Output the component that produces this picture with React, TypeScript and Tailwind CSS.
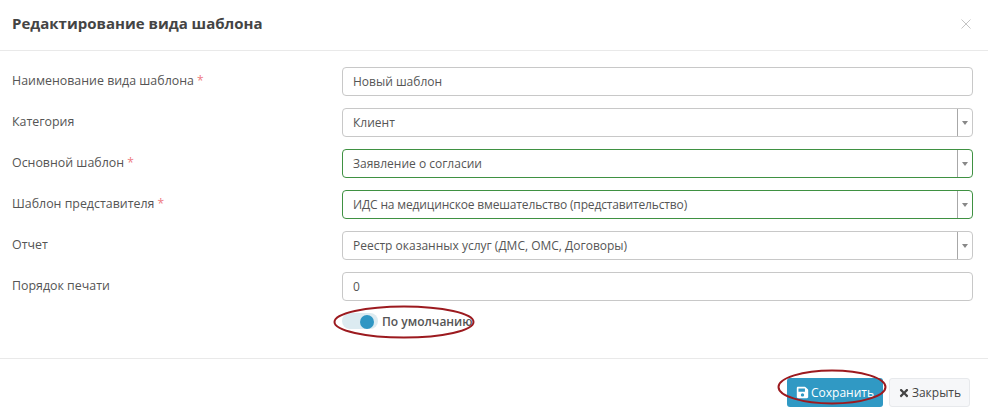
import React from 'react';
import { FaSave, FaTimes } from 'react-icons/fa';

const Field: React.FC<{ label: string; required?: boolean; children: React.ReactNode }> = ({ label, required, children }) => (
  <div className="flex h-[29px] items-center">
    <label className="w-[330px] shrink-0 text-[12.4px] text-[#555]">
      {label}
      {required && <span className="text-[12px] text-[#ee7a80]"> *</span>}
    </label>
    {children}
  </div>
);

const TextInput: React.FC<{ value: string }> = ({ value }) => (
  <div className="flex h-[29px] w-[631px] items-center rounded-[4px] border border-[#c8c8c8] bg-white pl-[10px] text-[12px] text-[#555]">
    {value}
  </div>
);

const SelectInput: React.FC<{ value: string; valid?: boolean; tight?: boolean }> = ({ value, valid, tight }) => (
  <div
    className={`flex h-[29px] w-[631px] items-center rounded-[4px] border bg-white text-[12px] text-[#555] ${
      valid ? 'border-[#3f9142]' : 'border-[#c8c8c8]'
    }`}
  >
    <span className={`flex-1 pl-[10px] ${tight ? 'tracking-[-0.15px]' : ''}`}>{value}</span>
    <span className="flex h-full w-[15px] items-center justify-center border-l border-[#a8a8a8]">
      <span className="h-0 w-0 border-x-[3.5px] border-t-[4px] border-x-transparent border-t-[#888]" />
    </span>
  </div>
);

// red hand-drawn marks over the screenshot
const Ellipse: React.FC<{ className: string; w: number; h: number }> = ({ className, w, h }) => (
  <svg className={`pointer-events-none absolute ${className}`} width={w} height={h} viewBox={`0 0 ${w} ${h}`}>
    <ellipse cx={w / 2} cy={h / 2} rx={w / 2 - 1.5} ry={h / 2 - 1.5} fill="none" stroke="#9c1a1f" strokeWidth="2" />
  </svg>
);

export default function App() {
  return (
    <div className="relative h-[419px] w-[988px] overflow-hidden bg-white font-['Open_Sans',sans-serif]">
      <div className="flex h-[51px] items-center justify-between border-b border-[#e9e9e9] pl-[12px] pr-[17px]">
        <h1 className="-translate-y-[2px] text-[15px] font-bold text-[#444]">Редактирование вида шаблона</h1>
        <svg width="10" height="10" viewBox="0 0 10 10" className="-translate-y-[1px]">
          <path d="M0.5 0.5L9.5 9.5M9.5 0.5L0.5 9.5" stroke="#b5b5b5" strokeWidth="0.8" />
        </svg>
      </div>

      <div className="flex flex-col gap-[12px] pl-[12px] pt-[16px]">
        <Field label="Наименование вида шаблона" required>
          <TextInput value="Новый шаблон" />
        </Field>
        <Field label="Категория">
          <SelectInput value="Клиент" />
        </Field>
        <Field label="Основной шаблон" required>
          <SelectInput value="Заявление о согласии" valid />
        </Field>
        <Field label="Шаблон представителя" required>
          <SelectInput value="ИДС на медицинское вмешательство (представительство)" valid tight />
        </Field>
        <Field label="Отчет">
          <SelectInput value="Реестр оказанных услуг (ДМС, ОМС, Договоры)" />
        </Field>
        <Field label="Порядок печати">
          <TextInput value="0" />
        </Field>
      </div>

      <div className="ml-[342px] mt-[10px] flex h-[20px] items-center">
        <span className="relative block h-[16px] w-[36px] rounded-full bg-[#dcebf1]">
          <span className="absolute left-[18px] top-[2px] h-[14px] w-[14px] rounded-full bg-[#2f96c3]" />
        </span>
        <span className="ml-[4px] translate-y-[1px] text-[12px] font-semibold text-[#555]">По умолчанию</span>
      </div>

      <div className="mt-[27px] flex h-[61px] items-start justify-end gap-[6px] border-t border-[#e9e9e9] pr-[18px] pt-[19px]">
        <button className="flex h-[29px] w-[96px] items-center justify-center gap-[2px] rounded-[3px] bg-[#3099c4] text-[12px] text-white">
          <FaSave className="text-[13px]" />
          Сохранить
        </button>
        <button className="flex h-[29px] w-[81px] items-center justify-center gap-[2px] rounded-[3px] border border-[#e7e9ec] bg-[#f6f7f9] text-[12px] text-[#444]">
          <FaTimes className="text-[12px]" />
          Закрыть
        </button>
      </div>

      <Ellipse className="left-[333px] top-[305px]" w={142} h={34} />
      <Ellipse className="left-[777px] top-[369px]" w={110} h={36} />
    </div>
  );
}
